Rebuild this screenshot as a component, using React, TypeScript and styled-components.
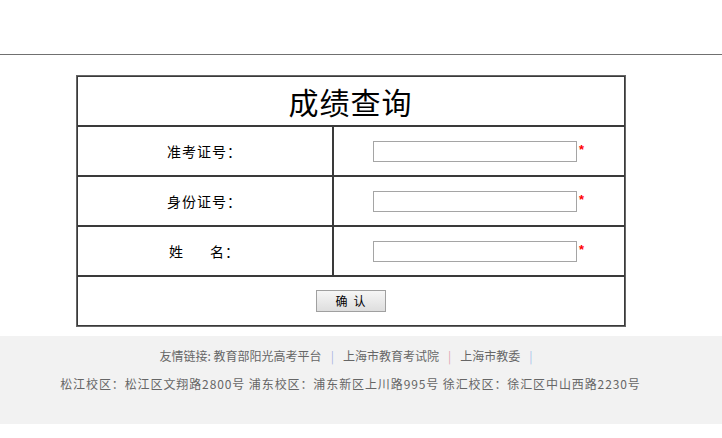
import styled, { createGlobalStyle } from "styled-components";

const GlobalStyle = createGlobalStyle`
  html, body {
    margin: 0;
    padding: 0;
    background: #fff;
    font-family: "Noto Sans CJK SC", "Liberation Sans", sans-serif;
  }
`;

const Page = styled.div`
  width: 722px;
  display: flex;
  flex-direction: column;
`;

const Header = styled.div`
  height: 54px;
  border-bottom: 1px solid #707070;
`;

const Main = styled.div`
  width: 701px;
  display: flex;
  justify-content: center;
  padding: 20px 0 9px;
`;

const Form = styled.table`
  width: 550px;
  table-layout: fixed;
  border-collapse: separate;
  border-spacing: 0;
  border: 1px solid #666;
`;

const Cell = styled.td`
  height: 48px;
  padding: 0;
  border: 1px solid #3a3a3a;
  text-align: center;
  vertical-align: middle;
  color: #000;
  font-size: 14px;
`;

const Title = styled.span`
  font-size: 30px;
  color: #000;
  letter-spacing: 1px;
`;

const Label = styled.span<{ $spread?: boolean }>`
  font-size: 14px;
  letter-spacing: 1px;
  word-spacing: ${({ $spread }) => ($spread ? "22px" : "0")};
`;

const FieldWrap = styled.div`
  display: flex;
  align-items: flex-start;
  justify-content: center;
`;

const Input = styled.input`
  width: 204px;
  height: 21px;
  box-sizing: border-box;
  border: 1px solid #a5a5a5;
  padding: 0 2px;
  margin: 0;
  background: #fff;
  outline: none;
`;

const Star = styled.span`
  color: #ff0000;
  font-size: 13px;
  font-weight: bold;
  line-height: 13px;
  margin-left: 2px;
  margin-top: 2px;
  font-family: "Liberation Sans", sans-serif;
`;

const Button = styled.button`
  width: 70px;
  height: 22px;
  border: 1px solid #a0a0a0;
  border-radius: 0;
  background: linear-gradient(#f6f6f6, #dedede);
  font-family: "Noto Sans CJK SC", sans-serif;
  font-size: 12px;
  color: #000;
  letter-spacing: 6px;
  padding: 0 0 0 6px;
  line-height: 20px;
`;

const Footer = styled.div`
  background: #f2f2f2;
  height: 88px;
  box-sizing: border-box;
  padding-top: 10px;
  display: flex;
  flex-direction: column;
  align-items: flex-start;
  gap: 8px;
`;

const FooterRow = styled.div<{ $spaced?: boolean }>`
  width: 701px;
  text-align: center;
  font-size: 12px;
  line-height: 20px;
  color: #666;
  letter-spacing: ${({ $spaced }) => ($spaced ? "0.9px" : "0")};
  white-space: nowrap;
`;

const Link = styled.a`
  color: #666;
  text-decoration: none;
`;

const Sep = styled.span<{ $color: string }>`
  color: ${({ $color }) => $color};
  margin: 0 9px;
`;

const fields = [
  { label: "准考证号：", spread: false },
  { label: "身份证号：", spread: false },
  { label: "姓 名：", spread: true },
];

export default function App() {
  return (
    <>
      <GlobalStyle />
      <Page>
        <Header />
        <Main>
          <Form>
            <colgroup>
              <col style={{ width: 256 }} />
              <col />
            </colgroup>
            <tbody>
              <tr>
                <Cell colSpan={2}>
                  <Title>成绩查询</Title>
                </Cell>
              </tr>
              {fields.map((f) => (
                <tr key={f.label}>
                  <Cell>
                    <Label $spread={f.spread}>{f.label}</Label>
                  </Cell>
                  <Cell>
                    <FieldWrap>
                      <Input type="text" />
                      <Star>*</Star>
                    </FieldWrap>
                  </Cell>
                </tr>
              ))}
              <tr>
                <Cell colSpan={2}>
                  <Button type="button">确认</Button>
                </Cell>
              </tr>
            </tbody>
          </Form>
        </Main>
        <Footer>
          <FooterRow>
            友情链接:&nbsp;<Link href="#">教育部阳光高考平台</Link>
            <Sep $color="#aab6e2">|</Sep>
            <Link href="#">上海市教育考试院</Link>
            <Sep $color="#e2a6b4">|</Sep>
            <Link href="#">上海市教委</Link>
            <Sep $color="#a9c2ea">|</Sep>
          </FooterRow>
          <FooterRow $spaced>
            松江校区：松江区文翔路2800号 浦东校区：浦东新区上川路995号 徐汇校区：徐汇区中山西路2230号
          </FooterRow>
        </Footer>
      </Page>
    </>
  );
}
